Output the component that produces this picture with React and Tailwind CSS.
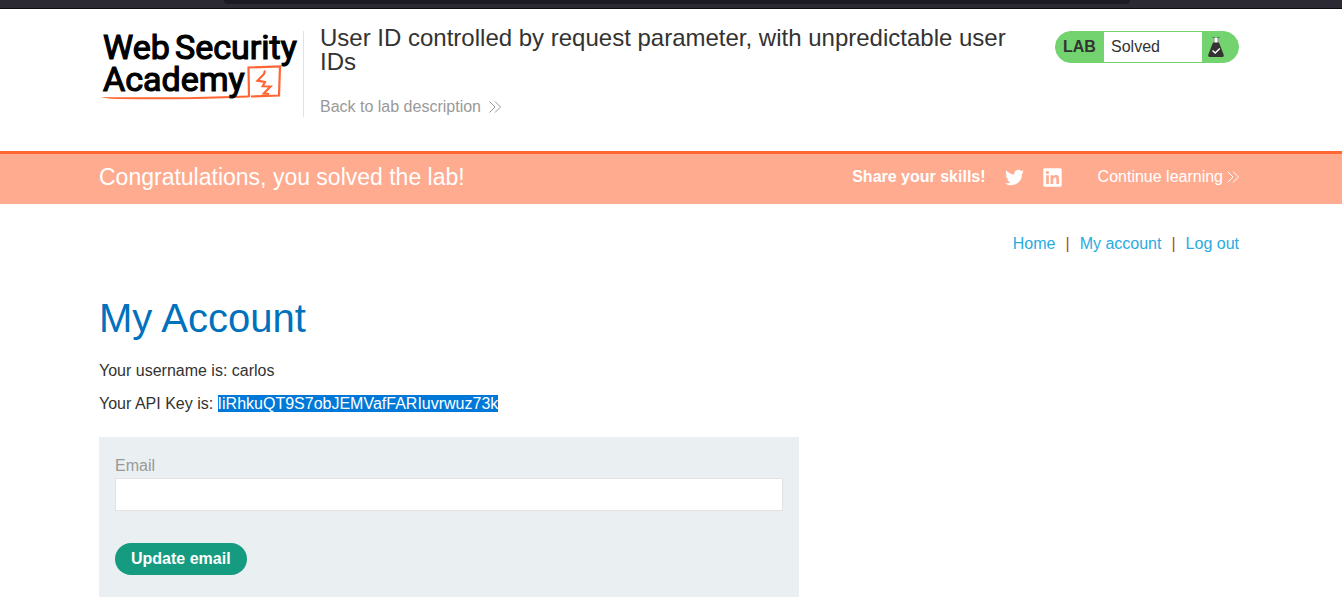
import { FaTwitter, FaLinkedin } from "react-icons/fa";

function Chevrons() {
  return (
    <svg width="12" height="12" viewBox="0 0 12 12" fill="none" stroke="currentColor" strokeWidth="1" aria-hidden="true">
      <path d="M0.5 0.5 L6 6 L0.5 11.5 M6 0.5 L11.5 6 L6 11.5" />
    </svg>
  );
}

function Logo() {
  return (
    <svg width="204" height="86" viewBox="0 -6 204 86" role="img" aria-label="Web Security Academy">
      <path d="M2 66 Q40 66.500 90 66.200 L151 64.500 L151 66.500 L100 68 Q40 68.500 12 67.800 Z" fill="#ff6633" />
      <path d="M151 66 L150.500 36.500 L182 35.500 L181 64.500 L153 65.500" fill="none" stroke="#ff6633" strokeWidth="2.2" />
      <path d="M167 39.500 L166 43 L159.500 49.700 L167 51 L164.700 55.300 L172.500 55.500 L165.700 62.500 L171 63" fill="none" stroke="#ff6633" strokeWidth="2.2" />
      <g fill="#000" stroke="#000" strokeWidth="1.2" fontFamily="Roboto, 'Liberation Sans', sans-serif" fontSize="34" fontWeight="400">
        <text x="5" y="28">Web</text>
        <text x="77" y="28">Security</text>
        <text x="5" y="60">Academy</text>
      </g>
    </svg>
  );
}

function Flask() {
  return (
    <svg width="16" height="20" viewBox="0 0 16 20" aria-hidden="true">
      <path d="M5.500 1 H10.500 V7 H5.500 Z" fill="#fff" />
      <path d="M4.500 0.500 H6.500 M9.500 0.500 H11.500 M6 0.500 V6 M10 0.500 V6" stroke="#555" strokeWidth="0.8" fill="none" />
      <path d="M5 5.500 H11 L15.600 17.500 Q16.200 20 14 20 H2 Q-0.200 20 0.400 17.500 Z" fill="#333332" />
      <path d="M4.500 13.500 L7.200 16 L11.800 11.500" fill="none" stroke="#fff" strokeWidth="1.4" />
    </svg>
  );
}

export default function App() {
  return (
    <div className="min-h-screen overflow-hidden bg-white font-['Liberation_Sans',Arial,sans-serif] text-base text-[#333332]">
      <div className="flex h-[9px] items-start justify-center border-b border-[#0c0c0d] bg-[#2b2a33]">
        <div className="mr-[212px] ml-[224px] h-1 flex-1 rounded-b bg-[#1c1b22]" />
      </div>

      <header className="flex h-[142px] items-start pt-4 pr-[103px] pl-[98px]">
        <a href="#academy" className="block w-[205px] shrink-0">
          <Logo />
        </a>
        <div className="mt-[6px] h-[86px] w-px bg-[#e2e2e2]" />
        <div className="mt-px ml-4 w-[720px]">
          <h1 className="text-2xl leading-6">
            User ID controlled by request parameter, with unpredictable user IDs
          </h1>
          <a href="#description" className="mt-[21px] flex items-center gap-2 leading-6 text-[#999]">
            Back to lab description
            <Chevrons />
          </a>
        </div>
        <div className="mt-[6px] ml-auto flex h-8 w-[184px] items-stretch overflow-hidden rounded-full border border-[#72d36f] bg-[#72d36f]">
          <span className="flex w-12 items-center pl-[7px] font-bold">LAB</span>
          <span className="flex w-[98px] items-center bg-white pl-[7px]">Solved</span>
          <span className="flex items-center pl-[6px]">
            <Flask />
          </span>
        </div>
      </header>

      <section className="border-t-[3px] border-[#ff6633] bg-[#ffab8f] text-white">
        <div className="flex h-[50px] items-center pr-[103px] pb-1 pl-[99px]">
          <h2 className="text-[23px] leading-6">Congratulations, you solved the lab!</h2>
          <span className="ml-auto font-bold">Share your skills!</span>
          <a href="#twitter" aria-label="Twitter" className="ml-[19px]">
            <FaTwitter size={19} />
          </a>
          <a href="#linkedin" aria-label="LinkedIn" className="ml-[18px]">
            <FaLinkedin size={21} />
          </a>
          <a href="#learning" className="ml-[35px] flex items-center gap-1">
            Continue learning
            <Chevrons />
          </a>
        </div>
      </section>

      <main className="pr-[103px] pl-[99px]">
        <nav className="flex justify-end gap-[10px] pt-7 leading-6 text-[#29abe2]">
          <a href="#home">Home</a>
          <span className="text-[#b04a10]">|</span>
          <a href="#account">My account</a>
          <span className="text-[#b04a10]">|</span>
          <a href="#logout">Log out</a>
        </nav>
        <h1 className="mt-10 text-[40px] leading-[44px] text-[#0071bc]">My Account</h1>
        <p className="mt-[19px] leading-6">Your username is: carlos</p>
        <p className="mt-[9px] leading-6">
          Your API Key is: <span className="bg-[#0078d7] text-white">IiRhkuQT9S7obJEMVafFARIuvrwuz73k</span>
        </p>
        <form className="mt-[21px] w-[700px] max-w-full bg-[#eaeff2] px-4 pt-[17px] pb-8" onSubmit={(e) => e.preventDefault()}>
          <label htmlFor="email" className="block leading-6 text-[#999]">
            Email
          </label>
          <input id="email" type="email" className="block h-[33px] w-full border border-[#e2e2e2] bg-white px-2 outline-none" />
          <button type="submit" className="mt-8 h-8 rounded-full bg-[#159b80] px-4 font-bold text-white">
            Update email
          </button>
        </form>
      </main>
    </div>
  );
}
